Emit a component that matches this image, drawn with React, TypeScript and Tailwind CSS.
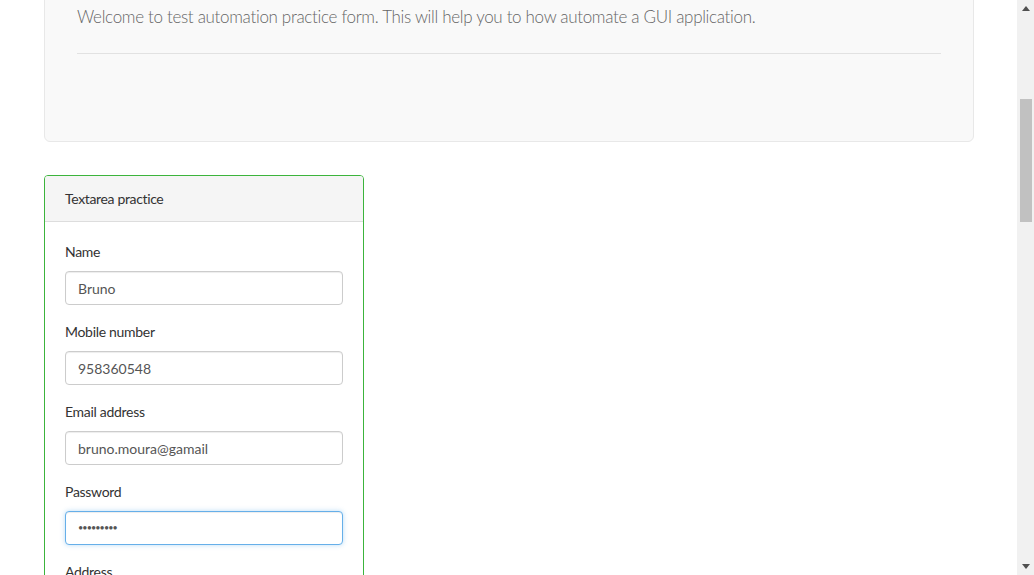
import React from "react";

function Field({ label, value, focus, password }: { label: string; value: string; focus?: boolean; password?: boolean }) {
  return (
    <div className="mb-[17px]">
      <div className="h-5 leading-5 text-[14px] tracking-[-0.3px] text-[#333] mb-[9px]">{label}</div>
      <div
        className={
          "h-[34px] w-[278px] rounded-[4px] border bg-white px-[12px] flex items-center text-[14px] text-[#555] " +
          (focus
            ? "border-[#66afe9] shadow-[inset_0_1px_1px_rgba(0,0,0,0.075),0_0_5px_rgba(102,175,233,0.45)]"
            : "border-[#ccc] shadow-[inset_0_1px_1px_rgba(0,0,0,0.075)]")
        }
      >
        {password ? (
          <span className="text-[9px] tracking-[-0.9px] text-[#555]">•••••••••</span>
        ) : (
          value
        )}
      </div>
    </div>
  );
}

export default function App() {
  return (
    <div className="w-[1034px] h-[575px] overflow-hidden flex bg-white" style={{ fontFamily: "Lato, 'Open Sans', sans-serif" }}>
      <div className="flex-1 pl-[44px]">
        <div className="-mt-[20px] w-[930px] h-[162px] rounded-b-[6px] border border-[#e8e8e8] bg-[#f9f9f9] px-[32px] pt-[24px]">
          <p className="text-[17px] leading-6 font-light tracking-[-0.32px] text-[#666]">
            Welcome to test automation practice form. This will help you to how automate a GUI application.
          </p>
          <div className="mt-[24px] h-px bg-[#e2e2e2]" />
        </div>
        <div className="mt-[33px] w-[320px] h-[420px] rounded-[4px] border border-[#3cb43c] overflow-hidden">
          <div className="h-[46px] bg-[#f5f5f5] border-b border-[#ddd] px-[20px] flex items-center text-[14px] tracking-[-0.35px] text-[#333]">
            Textarea practice
          </div>
          <div className="px-[20px] pt-[20px]">
            <Field label="Name" value="Bruno" />
            <Field label="Mobile number" value="958360548" />
            <Field label="Email address" value="bruno.moura@gamail" />
            <Field label="Password" value="" focus password />
            <div className="h-5 leading-5 text-[14px] tracking-[-0.3px] text-[#333]">Address</div>
          </div>
        </div>
      </div>
      <div className="w-[17px] h-full bg-[#f1f1f1] flex flex-col items-center">
        <div className="h-[17px] flex items-center justify-center">
          <svg width="8" height="5" viewBox="0 0 8 5"><path d="M4 0 L8 5 L0 5 Z" fill="#505050" /></svg>
        </div>
        <div className="mt-[82px] w-[12px] h-[123px] bg-[#c1c1c1]" />
        <div className="flex-1" />
        <div className="h-[17px] flex items-center justify-center">
          <svg width="8" height="5" viewBox="0 0 8 5"><path d="M0 0 L8 0 L4 5 Z" fill="#505050" /></svg>
        </div>
      </div>
    </div>
  );
}
